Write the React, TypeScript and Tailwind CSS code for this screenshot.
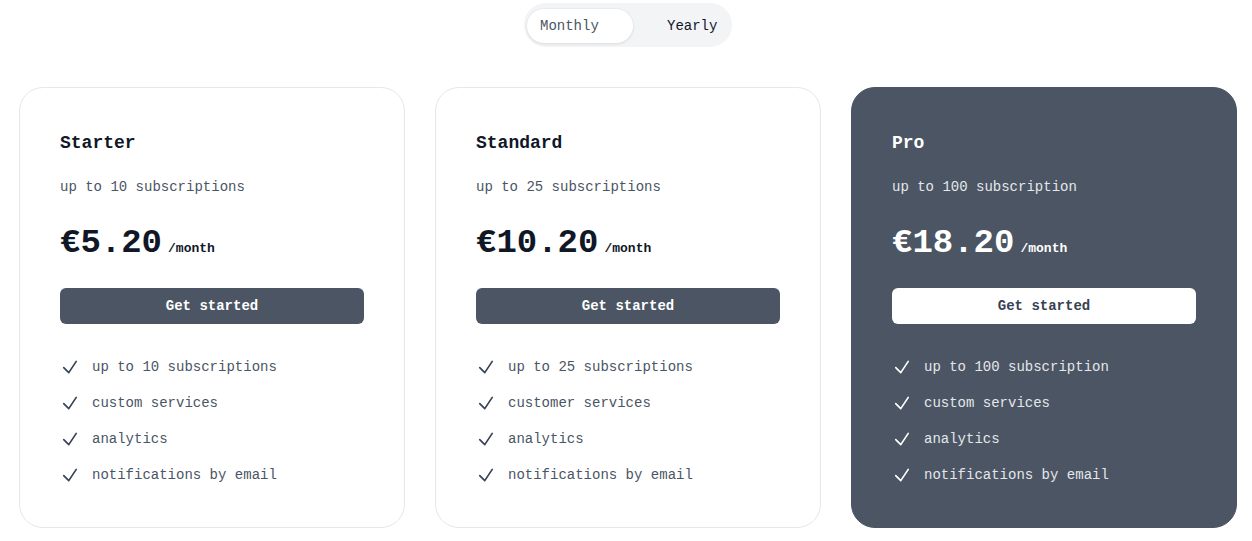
import clsx from 'clsx';

interface IPlan {
  name: string;
  subtitle: string;
  price: string;
  features: string[];
  featured?: boolean;
}

const plans: IPlan[] = [
  {
    name: 'Starter',
    subtitle: 'up to 10 subscriptions',
    price: '€5.20',
    features: ['up to 10 subscriptions', 'custom services', 'analytics', 'notifications by email'],
  },
  {
    name: 'Standard',
    subtitle: 'up to 25 subscriptions',
    price: '€10.20',
    features: ['up to 25 subscriptions', 'customer services', 'analytics', 'notifications by email'],
  },
  {
    name: 'Pro',
    subtitle: 'up to 100 subscription',
    price: '€18.20',
    features: ['up to 100 subscription', 'custom services', 'analytics', 'notifications by email'],
    featured: true,
  },
];

const CheckIcon = ({ className }: { className?: string }) => (
  <svg
    viewBox="0 0 24 24"
    fill="none"
    stroke="currentColor"
    strokeWidth={2}
    strokeLinecap="round"
    strokeLinejoin="round"
    className={className}
  >
    <path d="M4.5 12.75l6 6 9-13.5" />
  </svg>
);

const App = () => {
  return (
    <div className="min-h-screen bg-white pl-[19px] pr-[15px] pt-[3px] font-['Liberation_Mono',monospace]">
      <div className="flex justify-center">
        <div className="flex w-[208px] rounded-full bg-gray-100 pl-[3px] pt-[6px] pb-[4px]">
          <button className="h-[34px] w-[106px] rounded-full bg-white pl-[13px] text-left text-sm text-gray-600 shadow-sm ring-1 ring-gray-200/60">
            Monthly
          </button>
          <button className="h-[34px] flex-1 pl-[34px] text-left text-sm text-gray-900">
            Yearly
          </button>
        </div>
      </div>

      <div className="mt-10 grid grid-cols-3 gap-[30px]">
        {plans.map(plan => (
          <div
            key={plan.name}
            className={clsx(
              'h-[441px] rounded-3xl border px-10 pt-[41px]',
              plan.featured ? 'border-[#4b5563] bg-[#4b5563]' : 'border-gray-200 bg-white',
            )}
          >
            <h3
              className={clsx(
                'text-lg leading-7 font-bold',
                plan.featured ? 'text-white' : 'text-gray-900',
              )}
            >
              {plan.name}
            </h3>
            <p
              className={clsx(
                'mt-5 text-sm leading-5',
                plan.featured ? 'text-gray-200' : 'text-gray-600',
              )}
            >
              {plan.subtitle}
            </p>
            <div className="mt-[26px] flex h-10 items-baseline">
              <span
                className={clsx(
                  'text-[34px] leading-10 font-bold',
                  plan.featured ? 'text-white' : 'text-gray-900',
                )}
              >
                {plan.price}
              </span>
              <span
                className={clsx(
                  'ml-1.5 text-[13px] font-bold',
                  plan.featured ? 'text-white' : 'text-gray-900',
                )}
              >
                /month
              </span>
            </div>
            <button
              className={clsx(
                'mt-[25px] h-9 w-full rounded-md text-sm font-bold',
                plan.featured ? 'bg-white text-gray-700' : 'bg-[#4b5563] text-white',
              )}
            >
              Get started
            </button>
            <ul className="mt-[33px] space-y-4">
              {plan.features.map(feature => (
                <li
                  key={feature}
                  className={clsx(
                    'flex items-center gap-3 text-sm leading-5',
                    plan.featured ? 'text-gray-200' : 'text-gray-600',
                  )}
                >
                  <CheckIcon
                    className={clsx(
                      'h-5 w-5 shrink-0',
                      plan.featured ? 'text-white' : 'text-gray-700',
                    )}
                  />
                  {feature}
                </li>
              ))}
            </ul>
          </div>
        ))}
      </div>
    </div>
  );
};

export default App;
